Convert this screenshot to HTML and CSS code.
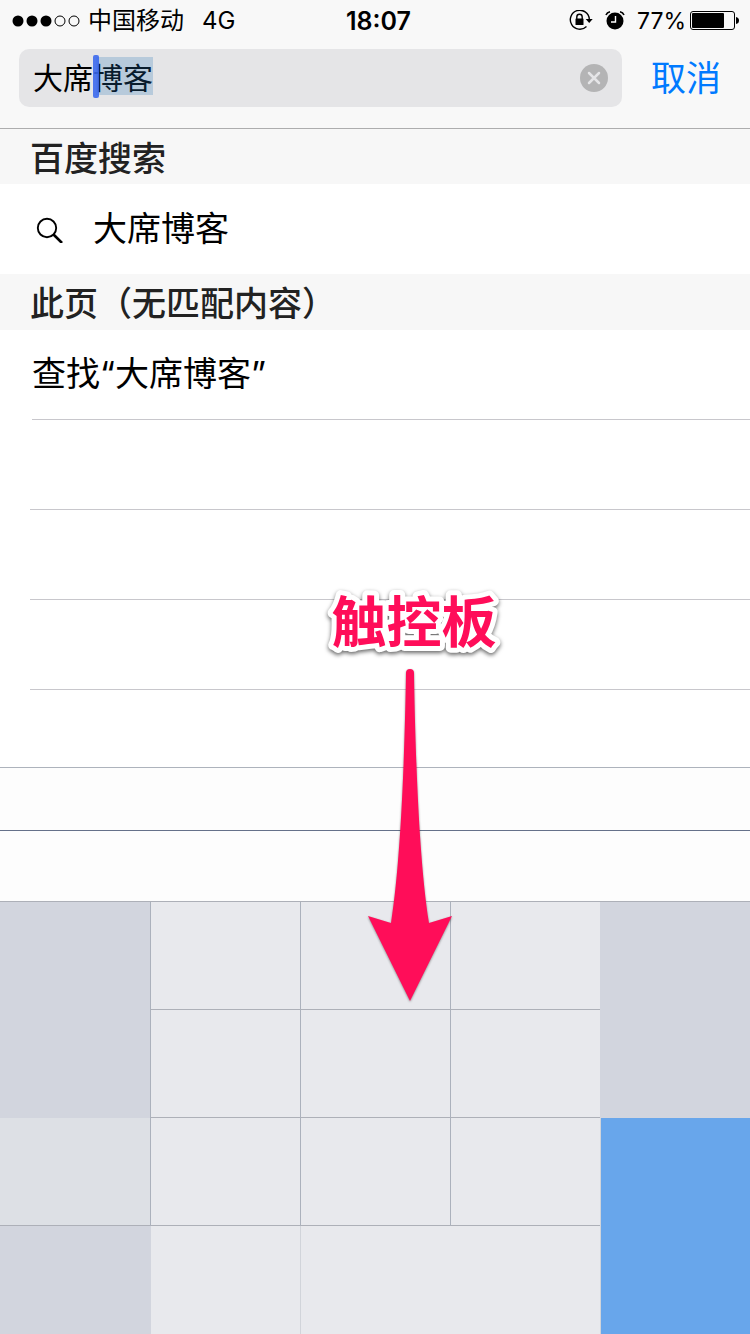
FILE: index.html
```html
<!DOCTYPE html>
<html lang="zh-CN">
<head>
<meta charset="utf-8">
<meta name="viewport" content="width=device-width, initial-scale=1">
<title>百度搜索</title>
<link rel="stylesheet" href="styles.css">
</head>
<body>
<div class="screen">
  <header class="top">
    <div class="status">
      <div class="status-left">
        <svg class="signal" width="68" height="12" viewBox="0 0 68 12" aria-hidden="true">
          <circle cx="6" cy="6" r="5.5"/><circle cx="20" cy="6" r="5.5"/><circle cx="34" cy="6" r="5.5"/>
          <circle class="hollow" cx="48" cy="6" r="5"/><circle class="hollow" cx="62" cy="6" r="5"/>
        </svg>
        <span class="carrier">中国移动</span>
        <span>4G</span>
      </div>
      <div class="clock">18:07</div>
      <div class="status-right">
        <svg width="24" height="22" viewBox="0 0 24 22" aria-hidden="true">
          <path d="M17.5 16.500A9.5 9.5 0 1 1 20.3 9" fill="none" stroke="#000" stroke-width="1.4"/>
          <path d="M16.7 9h7l-3.5 4z"/>
          <rect x="6.500" y="8.5" width="8" height="6.5" rx=".6"/>
          <path d="M7.800 9V7a2.7 2.7 0 0 1 5.400 0v2" fill="none" stroke="#000" stroke-width="1.4"/>
        </svg>
        <svg width="20" height="20" viewBox="0 0 20 20" aria-hidden="true">
          <circle cx="10" cy="10" r="8.500"/>
          <path d="M1 4Q2 1.500 5 .8M19 4Q18 1.500 15 .8" fill="none" stroke="#000" stroke-width="1.600"/>
          <path d="M10.500 5v6H6" fill="none" stroke="#fff" stroke-width="1.400"/>
        </svg>
        <span class="percent">77%</span>
        <svg class="battery" width="50" height="20" viewBox="0 0 50 20" aria-hidden="true">
          <rect x=".5" y=".5" width="44" height="18" rx="2.500" fill="none" stroke="#000"/>
          <rect x="2" y="2" width="32" height="15" rx="1"/>
          <path d="M46 6Q49 6.500 49 9.500T46 13z"/>
        </svg>
      </div>
    </div>
    <form class="search">
      <div class="field">
        <input class="query" type="text" value="大席博客" aria-label="搜索">
        <span class="selection"></span>
        <button class="clear" type="reset" aria-label="清除">
          <svg width="28" height="28" viewBox="0 0 28 28" aria-hidden="true">
            <circle cx="14" cy="14" r="14" fill="#b4b4b5"/>
            <path d="M9 9l10 10M19 9L9 19" stroke="#e5e5e7" stroke-width="2.500" stroke-linecap="round"/>
          </svg>
        </button>
      </div>
      <button class="cancel" type="button">取消</button>
    </form>
  </header>

  <main class="results">
    <h2 class="group">百度搜索</h2>
    <button class="row suggestion" type="button">
      <svg width="28" height="28" viewBox="0 0 28 28" aria-hidden="true">
        <circle cx="11" cy="13" r="9.200" fill="none" stroke="#000" stroke-width="1.900"/>
        <path d="M17.500 19.500L26 28" stroke="#000" stroke-width="2.600"/>
      </svg>
      <span class="label">大席博客</span>
    </button>
    <h2 class="group">此页（无匹配内容）</h2>
    <button class="row find" type="button"><span class="label">查找“大席博客”</span></button>
    <div class="blank"></div>
    <div class="blank"></div>
    <div class="blank"></div>
  </main>

  <section class="keyboard" aria-label="键盘">
    <div class="composing"></div>
    <div class="candidates"></div>
    <div class="keys">
      <div class="side tall"></div>
      <div class="key"></div><div class="key"></div><div class="key"></div>
      <div class="side tall"></div>
      <div class="key"></div><div class="key"></div><div class="key"></div>
      <div class="side pale"></div>
      <div class="key"></div><div class="key"></div><div class="key"></div>
      <div class="enter tall"></div>
      <div class="side"></div>
      <div class="key last"></div>
      <div class="key space"></div>
    </div>
  </section>

  <svg class="note" width="180" height="420" viewBox="0 0 180 420">
    <text class="note-text" x="94" y="60" text-anchor="middle">触控板</text>
    <path class="arrow" transform="translate(48 87)" d="M38 4Q38 0 42 0T46 4C47 65 50 185 61 254L84 247 42 332 0 247 23 254C34 185 37 65 38 4z"/>
  </svg>
</div>
</body>
</html>
```

FILE: styles.css
```css
* { box-sizing: border-box; }

body {
  margin: 0;
  background: #fff;
  color: #000;
  font-family: Inter, "Noto Sans CJK SC", sans-serif;
}

button, input {
  margin: 0;
  padding: 0;
  border: 0;
  background: none;
  color: inherit;
  font: inherit;
}

svg { display: block; flex: none; }

.screen {
  position: relative;
  display: flex;
  flex-direction: column;
  min-height: 100vh;
}

.top {
  background: #f8f8f8;
  border-bottom: 1px solid #adadae;
}

.status {
  display: grid;
  grid-template-columns: 1fr auto 1fr;
  align-items: center;
  height: 41px;
  padding: 0 10px 0 12px;
  font-size: 24px;
  line-height: 40px;
}

.status-left, .status-right { display: flex; align-items: center; }
.status-left { gap: 18px; }
.status-right { justify-content: flex-end; gap: 12px; }
.signal { margin-right: -10px; }
.hollow { fill: none; stroke: #000; }
.clock { padding-left: 5px; font-size: 25px; font-weight: 600; }
.battery { margin-left: -8px; }
.percent { font-size: 23px; }

.search {
  display: flex;
  align-items: center;
  margin: 0;
  padding: 8px 29px 21px 19px;
  gap: 29px;
}

.field {
  position: relative;
  display: flex;
  align-items: center;
  flex: 1;
  height: 58px;
  padding: 0 14px;
  border-radius: 10px;
  background: #e5e5e7;
}

.query {
  flex: 1;
  min-width: 0;
  height: 58px;
  padding-bottom: 4px;
  font-size: 30px;
  outline: none;
}

.selection {
  position: absolute;
  left: 77px;
  top: 8px;
  width: 57px;
  height: 38px;
  background: rgba(36, 119, 184, 0.24);
}

.selection::before {
  content: "";
  position: absolute;
  left: -3px;
  top: -2px;
  width: 6px;
  height: 43px;
  border-radius: 2px;
  background: rgba(56, 102, 238, 0.88);
}

.cancel {
  color: #007aff;
  font-size: 35px;
  line-height: 58px;
}

.results {
  flex: 1;
  display: flex;
  flex-direction: column;
}

.group {
  margin: 0;
  padding-left: 30px;
  background: #f7f7f7;
  color: #222;
  font-family: "Noto Sans CJK SC", sans-serif;
  font-size: 34px;
  font-weight: 500;
  line-height: 56px;
}

.group:first-child { line-height: 55px; }

.row {
  display: flex;
  align-items: center;
  width: 100%;
  height: 90px;
  font-size: 34px;
  text-align: left;
}

.label { padding-bottom: 6px; }

.suggestion { padding-left: 36px; gap: 29px; }

.find {
  width: auto;
  margin-left: 32px;
  border-bottom: 1px solid #c8c7cc;
}

.blank {
  height: 90px;
  margin-left: 30px;
  border-bottom: 1px solid #c8c7cc;
}

.keyboard { background: #fdfdfd; }

.composing {
  height: 64px;
  border-top: 1px solid #adb3bc;
  border-bottom: 1px solid #65718a;
}

.candidates { height: 70px; }

.keys {
  display: grid;
  grid-template-columns: repeat(5, 1fr);
  grid-auto-rows: 108px;
  border-top: 1px solid #adb0b8;
}

.key {
  background: #e8e9ed;
  border-left: 1px solid #abb1bc;
  border-bottom: 1px solid #adb0b8;
}

.side { background: #d2d5de; }
.tall { grid-row: span 2; }
.pale { background: #dde0e5; border-bottom: 1px solid #adb0b8; }
.last { border-color: #d2d5de; border-bottom: 0; }
.space { grid-column: span 2; border-color: #d1d4da; border-bottom: 0; }
.enter { background: #68a6eb; border-left: 1px solid #d1d4da; }

.note {
  position: absolute;
  left: calc(55% - 93px);
  bottom: 332px;
  overflow: visible;
  pointer-events: none;
}

.note-text {
  fill: #ff0d59;
  stroke: #fff;
  stroke-width: 10px;
  stroke-linejoin: round;
  paint-order: stroke fill;
  font-size: 55px;
  font-weight: 700;
  filter: drop-shadow(0 2px 2px rgba(0, 0, 0, 0.6));
}

.arrow {
  fill: #ff0d59;
  filter: drop-shadow(0 1px 1px rgba(0, 0, 0, 0.4));
}
```
